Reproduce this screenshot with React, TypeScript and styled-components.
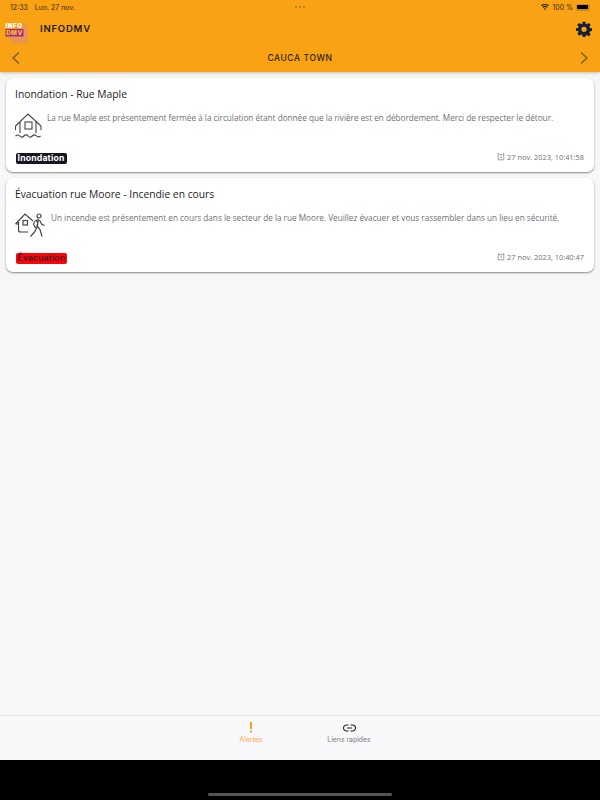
import React from "react";
import styled, { createGlobalStyle } from "styled-components";

const Global = createGlobalStyle`
  html, body { margin: 0; padding: 0; background: #000; }
  * { box-sizing: border-box; }
`;

const Page = styled.div`
  width: 600px; height: 800px; display: flex; flex-direction: column;
  background: #f7f7f9; font-family: "Open Sans", sans-serif; overflow: hidden;
`;
const Header = styled.header`
  height: 72px; background: #f8a214; display: flex; flex-direction: column;
  box-shadow: 0 1px 3px rgba(120,80,20,.35); flex: none;
`;
const StatusBar = styled.div`
  height: 13px; padding: 1px 10px 0 10px; display: flex; align-items: center;
  font-family: "Inter", sans-serif; font-size: 7px; color: #3a2c10;
`;
const StatusGroup = styled.div`
  flex: 1; display: flex; align-items: center; gap: ${p => p.$gap}px;
  justify-content: ${p => p.$end ? "flex-end" : "flex-start"};
`;
const Dots = styled.div`
  display: flex; gap: 2px;
  span { width: 2px; height: 2px; border-radius: 50%; background: #a9792a; }
`;
const Battery = styled.div`
  width: 14px; height: 7px; border-radius: 2px; padding: 1.5px 2px 1.5px 1px; background: #c98a20;
  &::before { content: ""; display: block; width: 100%; height: 100%; border-radius: 1px; background: #000; }
`;
const TopBar = styled.div`
  height: 31px; padding: 0 8px 0 4px; display: flex; align-items: center;
`;
const Logo = styled.div`
  width: 24px; height: 24px; position: relative; margin-right: 12px;
`;
const AppName = styled.div`
  font-family: "Inter", sans-serif; font-weight: 600; font-size: 9.5px; letter-spacing: .8px; color: #1a1c2c;
`;
const Spacer = styled.div`flex: 1;`;
const NavBar = styled.div`
  height: 28px; padding: 0 11px; display: flex; justify-content: space-between; align-items: center;
`;
const Town = styled.div`
  font-family: "Inter", sans-serif; font-weight: 500; font-size: 8.5px; letter-spacing: .6px; color: #2b2415;
`;
const Main = styled.main`
  flex: 1; padding: 6px 6px 0; display: flex; flex-direction: column; gap: 6px;
`;
const Card = styled.article`
  height: 94px; background: #fff; border-radius: 7px; padding: 9px 9px 8px 9px;
  display: flex; flex-direction: column; box-shadow: 0 1px 2px rgba(0,0,0,.45);
`;
const Title = styled.h2`
  margin: 0; font-weight: 400; font-size: 10.3px; line-height: 14px; color: #1b1b1f;
`;
const Content = styled.div`
  margin-top: 10px; display: flex; gap: ${p => p.$gap}px; flex: 1; align-items: flex-start;
`;
const Body = styled.p`
  margin: 0; font-size: 8.2px; line-height: 13px; color: #6f6f75; white-space: nowrap;
`;
const Footer = styled.div`display: flex; justify-content: space-between; align-items: center;`;
const Badge = styled.span`
  font-family: "Inter", sans-serif; font-weight: ${p => p.$danger ? 500 : 700}; font-size: 8.6px; letter-spacing: .22px; line-height: 11px; padding: 0 2px; margin-left: .5px; border-radius: 2px;
  background: ${p => p.$danger ? "#fa0505" : "#16161e"};
  color: ${p => p.$danger ? "#2a1030" : "#fff"};
`;
const Stamp = styled.div`
  display: flex; align-items: center; gap: 2px; font-size: 7.4px; color: #6f6f75; padding: 0 1px 2px 0;
`;
const TabBar = styled.nav`
  height: 45px; flex: none; border-top: 1px solid #e6e6e9; background: #f8f8fa; display: flex; justify-content: center; padding-top: 6px;
`;
const Tab = styled.div`
  width: 98px; display: flex; flex-direction: column; align-items: center; gap: 2px;
  font-family: "Inter", sans-serif; font-size: 6.9px; color: ${p => p.$active ? "#f8a948" : "#7d7d82"};
`;
const IconSlot = styled.div`height: 11px; display: flex; align-items: center; justify-content: center;`;
const Bottom = styled.div`
  height: 40px; flex: none; background: #000; display: flex; align-items: flex-end; justify-content: center; padding-bottom: 4px;
`;
const Indicator = styled.div`width: 184px; height: 3px; border-radius: 2px; background: #555;`;

const LogoArt = () => (
  <svg width="30" height="34" viewBox="0 0 30 34" style={{ position: "absolute", left: 0, top: 0 }}>
    <polygon points="2,18 20,6 24,10.500 24,26.500 10,26.500" fill="#e8964f" />
    <rect x="1.500" y="12" width="18" height="7.500" fill="#a8268a" />
    <text x="10" y="11.300" textAnchor="middle" fontFamily="Inter, sans-serif" fontWeight="900" fontSize="6.100" letterSpacing=".6" fill="#fff">INFO</text>
    <text x="10.500" y="18.400" textAnchor="middle" fontFamily="Inter, sans-serif" fontWeight="900" fontSize="6.100" letterSpacing=".5" fill="#f6b52a">DMV</text>
  </svg>
);
const Gear = () => (
  <svg width="16" height="16" viewBox="0 0 24 24" fill="#16203a">
    <path fillRule="evenodd" d="M10 1h4l.6 3.100 1.900.8L19.200 3 22 5.800l-1.900 2.700.8 1.900L24 11v4l-3.100.6-.8 1.900 1.900 2.700-2.800 2.800-2.700-1.900-1.900.8L14 24h-4l-.6-3.100-1.900-.8L4.800 22 2 19.200l1.900-2.700-.8-1.900L0 15v-4l3.100-.6.8-1.900L2 5.800 4.800 3l2.700 1.900 1.900-.8L10 1zm2 7.500a4 4 0 1 0 0 8 4 4 0 0 0 0-8z" />
  </svg>
);
const Chevron = ({ left }: { left?: boolean }) => (
  <svg width="10" height="14" viewBox="0 0 10 14" fill="none" stroke="#6f5a30" strokeWidth="1.300">
    <path d={left ? "M8 1.500 2 7l6 5.500" : "M2 1.500 8 7l-6 5.500"} />
  </svg>
);
const Wifi = () => (
  <svg width="8" height="6" viewBox="0 0 12 9" fill="#1a1a1a">
    <path d="M6 9 4.300 7a2.500 2.500 0 0 1 3.400 0L6 9zM3.300 5.800 2.200 4.600a5.500 5.500 0 0 1 7.600 0L8.700 5.800a4 4 0 0 0-5.400 0zM1.200 3.500 0 2.300a8.500 8.500 0 0 1 12 0l-1.200 1.200a7 7 0 0 0-9.600 0z" />
  </svg>
);
const FloodHouse = () => (
  <svg width="28" height="28" viewBox="0 0 28 28" fill="none" stroke="#444449" strokeWidth="1.100">
    <path d="M.5 15 13 3l13 12M.5 15v4M26 15v4M5 11v11M21 11v11" />
    <rect x="10" y="11" width="7" height="7" />
    <path d="M.5 25c2-1.500 3-1.500 4.200 0s2.800 1.500 4.200 0 3-1.500 4.200 0 2.800 1.500 4.200 0 3-1.500 4.200 0 2.500 1 4.200 0" />
  </svg>
);
const EvacHouse = () => (
  <svg width="31" height="26" viewBox="0 0 31 26" fill="none" stroke="#444449" strokeWidth="1.200">
    <path d="M.5 13 10 3l8 7M.5 13h3M3.500 11v8a2 2 0 0 0 2 2H13" />
    <rect x="8" y="9.500" width="4.500" height="4.500" />
    <circle cx="24" cy="5" r="2" />
    <path d="M23.500 8.500c-2.500 0-4.500 2.500-5 5l2 3.500M23.500 8.500 22 15l3 3.500 2 7M22 15.500l-2 5-4.500 5M24.500 9l2 4 3 1.500M21.500 9.500c1.500 2 1.500 4.500.5 6" />
  </svg>
);
const Alarm = () => (
  <svg width="8" height="8" viewBox="0 0 10 10" fill="none" stroke="#6f6f75" strokeWidth=".8">
    <path d="M1.500 2h7v6.500h-7zM.8 1 2.300.5M9.200 1 7.700.5" />
    <path d="M5 3.500v2.200l1.300.6" />
  </svg>
);
const LinkIcon = () => (
  <svg width="13" height="8" viewBox="0 0 13 8" fill="none" stroke="#222" strokeWidth="1.100">
    <path d="M5.500 1H3.500a3 3 0 0 0 0 6h2M7.500 1h2a3 3 0 0 1 0 6h-2M4 4h5" />
  </svg>
);
const Excl = () => (
  <svg width="4" height="11" viewBox="0 0 4 11" fill="#f8a214">
    <rect x="1" y="0" width="2" height="7" />
    <rect x="1" y="8.500" width="2" height="2" />
  </svg>
);

const alerts = [
  { title: "Inondation - Rue Maple", icon: <FloodHouse />, gap: 4, text: "La rue Maple est présentement fermée à la circulation étant donnée que la rivière est en débordement. Merci de respecter le détour.", tag: "Inondation", danger: false, date: "27 nov. 2023, 10:41:58" },
  { title: "Évacuation rue Moore - Incendie en cours", icon: <EvacHouse />, gap: 5, text: "Un incendie est présentement en cours dans le secteur de la rue Moore. Veuillez évacuer et vous rassembler dans un lieu en sécurité.", tag: "Évacuation", danger: true, date: "27 nov. 2023, 10:40:47" },
];

export default function App() {
  return (
    <Page>
      <Global />
      <Header>
        <StatusBar>
          <StatusGroup $gap={7}><span>12:33</span><span>Lun. 27 nov.</span></StatusGroup>
          <Dots><span /><span /><span /></Dots>
          <StatusGroup $gap={3} $end><Wifi /><span>100 %</span><Battery /></StatusGroup>
        </StatusBar>
        <TopBar>
          <Logo><LogoArt /></Logo>
          <AppName>INFODMV</AppName>
          <Spacer />
          <Gear />
        </TopBar>
        <NavBar>
          <Chevron left />
          <Town>CAUCA TOWN</Town>
          <Chevron />
        </NavBar>
      </Header>
      <Main>
        {alerts.map(a => (
          <Card key={a.tag}>
            <Title>{a.title}</Title>
            <Content $gap={a.gap}>
              {a.icon}
              <Body>{a.text}</Body>
            </Content>
            <Footer>
              <Badge $danger={a.danger}>{a.tag}</Badge>
              <Stamp><Alarm />{a.date}</Stamp>
            </Footer>
          </Card>
        ))}
      </Main>
      <TabBar>
        <Tab $active><IconSlot><Excl /></IconSlot>Alertes</Tab>
        <Tab><IconSlot><LinkIcon /></IconSlot>Liens rapides</Tab>
      </TabBar>
      <Bottom><Indicator /></Bottom>
    </Page>
  );
}
